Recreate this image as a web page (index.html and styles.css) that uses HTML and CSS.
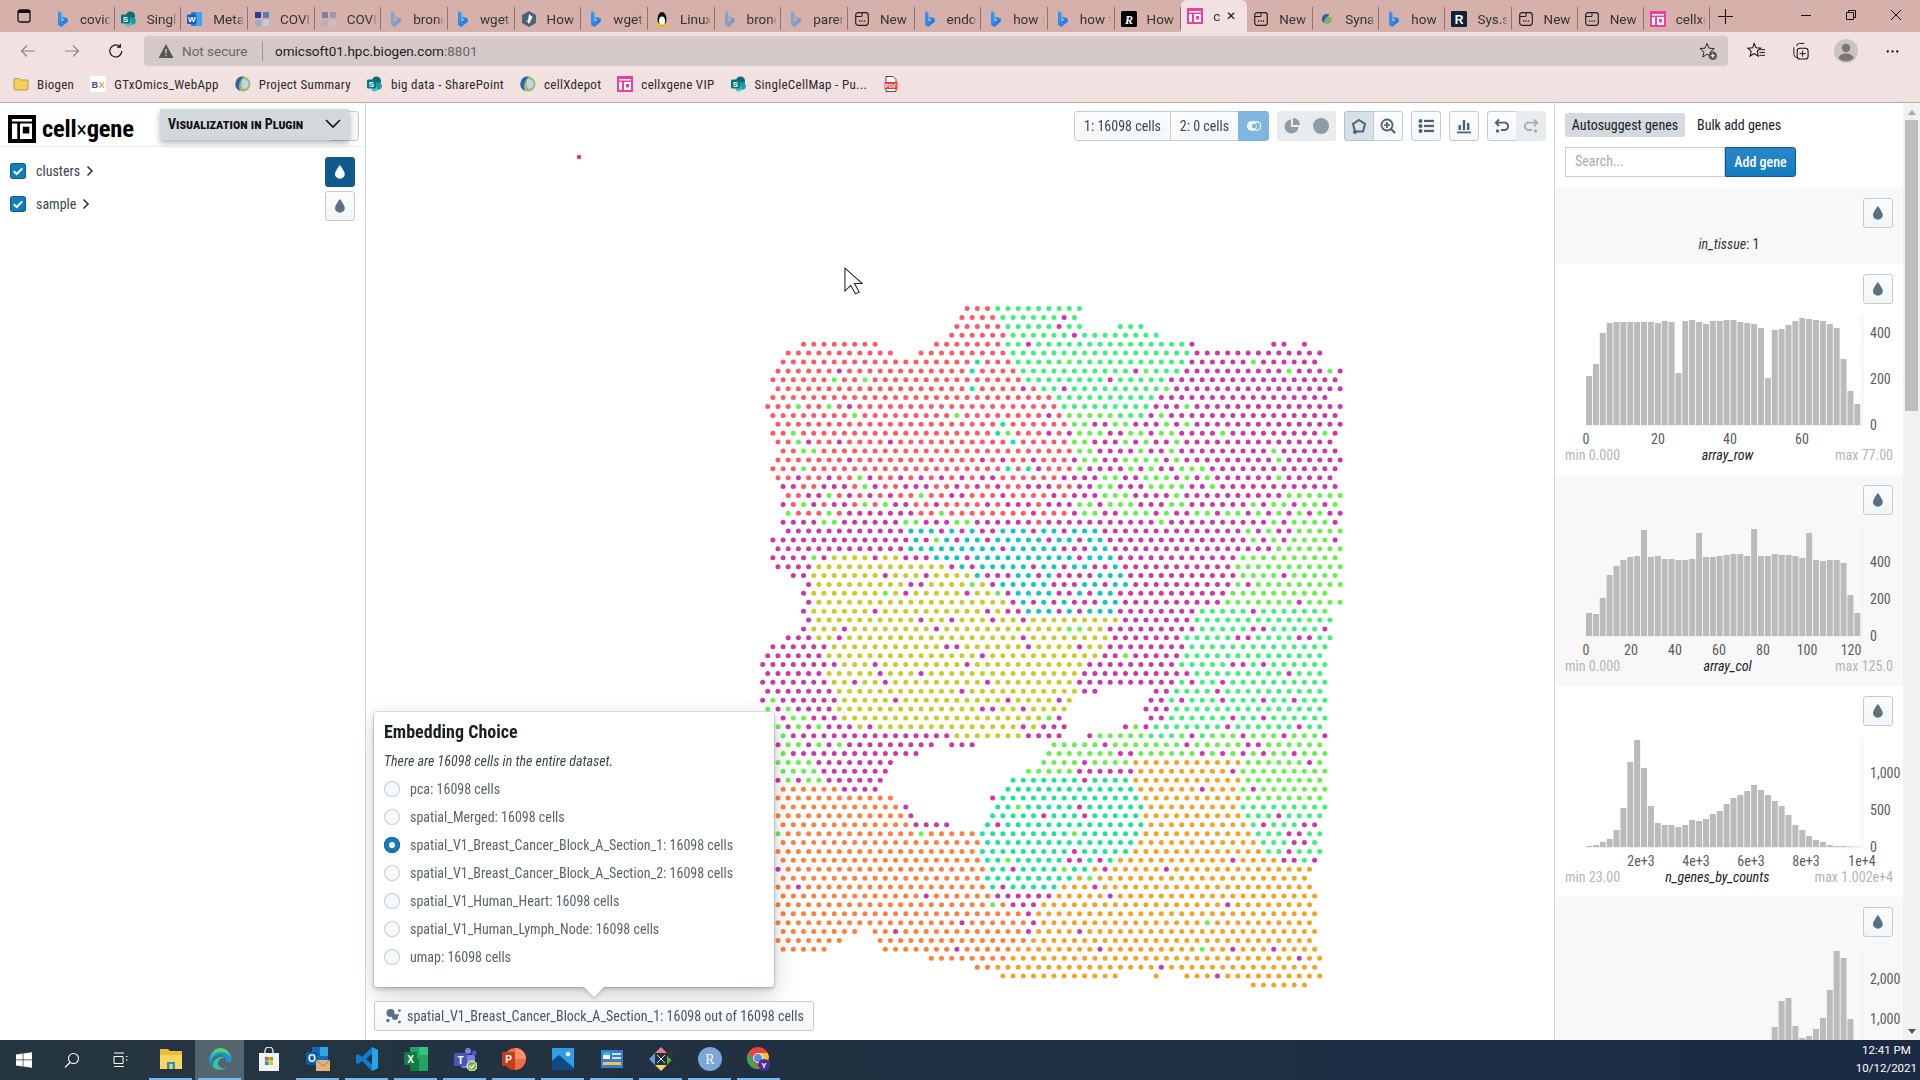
FILE: index.html
```html
<!DOCTYPE html>
<html lang="en">
<head>
<meta charset="utf-8">
<title>cellxgene</title>
<link rel="stylesheet" href="styles.css">
</head>
<body>
<svg class="sprite" xmlns="http://www.w3.org/2000/svg">
  <defs>
    <linearGradient id="bingfill" x1="0" y1="0" x2="1" y2="1"><stop offset="0" stop-color="#3aa0f0"/><stop offset="1" stop-color="#1c6fe0"/></linearGradient>
    <symbol id="bing" viewBox="0 0 16 16"><path fill="url(#bingfill)" d="M4 0l3.400 1.200v9.400l3-1.700-1.600-.8-1-2.600 6 2.100v3.200L7.400 16 4 14.100z"/></symbol>
    <symbol id="sp" viewBox="0 0 16 16"><circle cx="9.500" cy="5" r="4.500" fill="#0b6a70"/><circle cx="11" cy="10" r="3.800" fill="#1a9ba1"/><circle cx="7.500" cy="12.500" r="3" fill="#37c6d0"/><rect x="0" y="3.500" width="9" height="9" rx="1.200" fill="#03787c"/><text x="4.500" y="10.800" class="svgglyph">S</text></symbol>
    <symbol id="word" viewBox="0 0 16 16"><rect x="4" y="1" width="11" height="14" rx="1" fill="#2b7cd3"/><rect x="9" y="1" width="6" height="14" fill="#41a5ee"/><rect x="0" y="3.500" width="9.500" height="9.500" rx="1" fill="#185abd"/><text x="4.700" y="11" class="svgglyph">W</text></symbol>
    <symbol id="grid" viewBox="0 0 16 16"><rect x="1" y="1" width="6" height="6" fill="#2a3f8f"/><rect x="9" y="1" width="6" height="6" fill="#5a7ab8"/><rect x="1" y="9" width="6" height="6" fill="#8fb0d6"/><rect x="9" y="9" width="6" height="6" fill="#b9d2e6"/></symbol>
    <symbol id="hex" viewBox="0 0 16 16"><path fill="#4c6275" d="M8 0l7 4v8l-7 4-7-4V4z"/><path fill="#fff" d="M8 3l3.500 3-3.500 7-3-4 2 1z"/></symbol>
    <symbol id="tux" viewBox="0 0 16 16"><ellipse cx="8" cy="8" rx="4.500" ry="7" fill="#111"/><ellipse cx="8" cy="10" rx="3" ry="4.500" fill="#fff"/><ellipse cx="4.500" cy="14" rx="3" ry="1.500" fill="#f5c012"/><ellipse cx="11.500" cy="14" rx="3" ry="1.500" fill="#f5c012"/></symbol>
    <symbol id="nt" viewBox="0 0 16 16"><rect x="1.700" y="1.700" width="12.600" height="12.600" rx="2.500" fill="none" stroke="#222" stroke-width="1.200"/><path d="M2 5.500h6V2" fill="none" stroke="#222"/><path d="M5 10h1.200M7.400 10h1.200M9.800 10H11" stroke="#222" stroke-width="1.400"/></symbol>
    <symbol id="rblack" viewBox="0 0 16 16"><rect width="16" height="16" rx="1.500" fill="#000"/><text x="8" y="12.500" class="svgglyph svgitalic">R</text></symbol>
    <symbol id="rnavy" viewBox="0 0 16 16"><rect width="16" height="16" rx="1" fill="#0d2538"/><text x="8" y="12.500" class="svgglyph svgbig">R</text></symbol>
    <symbol id="pink" viewBox="0 0 16 16"><rect width="16" height="16" fill="#ef3e9c"/><path fill="#fff" d="M2 3h12v1.500H2zM2 6h3v8H2zM7 6h7v8H7z"/><rect x="9" y="8" width="3" height="3.500" fill="#ef3e9c"/></symbol>
    <symbol id="swirl" viewBox="0 0 16 16"><circle cx="8" cy="8" r="5" fill="#7fae6a"/><path fill="#2a5fa8" d="M8 3a5 5 0 0 0-3 9c0-4 2-6 6-8z"/><circle cx="11" cy="5" r="1.500" fill="#e3c24d"/></symbol>
    <symbol id="globe" viewBox="0 0 16 16"><circle cx="8" cy="8" r="7.500" fill="#9db96d"/><path fill="#2f62a8" d="M8 .5a7.500 7.500 0 0 0-3 14.400C2.500 10 5 4 9 .6z"/><path fill="#c4d6e6" d="M8 3a5 5 0 0 1 1 10C6 11 6 6 8 3z"/></symbol>
    <symbol id="folder" viewBox="0 0 16 16"><path fill="#f5cf58" stroke="#a88a2a" stroke-width=".8" d="M1 3.500a1 1 0 0 1 1-1h4l1.500 1.500H14a1 1 0 0 1 1 1v8a1 1 0 0 1-1 1H2a1 1 0 0 1-1-1z"/></symbol>
    <symbol id="bx" viewBox="0 0 16 16"><rect width="16" height="16" fill="#fff"/><text x="5" y="12" class="svgglyph svgbx">B</text><text x="12" y="12" class="svgglyph svgbxo">X</text></symbol>
    <symbol id="pdf" viewBox="0 0 16 16"><path fill="#fff" stroke="#222" stroke-width=".8" d="M3 .5h7l3 3V15.500H3z"/><rect x="1.500" y="6" width="13" height="7" fill="#ee3c3c"/><text x="8" y="11.700" class="svgglyph svgtiny">PDF</text></symbol>
    <symbol id="tint" viewBox="0 0 16 16"><path d="M7.880 1s-4.900 6.220-4.900 8.900a4.900 4.900 0 0 0 9.800 0C12.780 7.220 7.880 1 7.880 1z"/></symbol>
    <symbol id="checkbox" viewBox="0 0 16 16"><path d="M3.700 8.200l3 2.800 5.600-5.600" fill="none" stroke="#fff" stroke-width="2"/></symbol>
  </defs>
</svg>

<header class="tabstrip">
  <button class="tab-menu"><svg viewBox="0 0 16 16"><rect x="2" y="2" width="12" height="12" rx="2" fill="none" stroke="#111" stroke-width="1.300"/><rect x="2" y="2" width="12" height="3" fill="#111"/></svg></button>
  <div class="tabs">
    <div class="tab"><svg class="fav"><use href="#bing"/></svg><span>covid</span></div>
    <div class="tab"><svg class="fav"><use href="#sp"/></svg><span>Single</span></div>
    <div class="tab"><svg class="fav"><use href="#word"/></svg><span>Meta</span></div>
    <div class="tab"><svg class="fav"><use href="#grid"/></svg><span>COVID</span></div>
    <div class="tab faded"><svg class="fav"><use href="#grid"/></svg><span>COVID</span></div>
    <div class="tab faded"><svg class="fav"><use href="#bing"/></svg><span>bronc</span></div>
    <div class="tab"><svg class="fav"><use href="#bing"/></svg><span>wget</span></div>
    <div class="tab"><svg class="fav"><use href="#hex"/></svg><span>How t</span></div>
    <div class="tab"><svg class="fav"><use href="#bing"/></svg><span>wget</span></div>
    <div class="tab"><svg class="fav"><use href="#tux"/></svg><span>Linux</span></div>
    <div class="tab faded"><svg class="fav"><use href="#bing"/></svg><span>bronc</span></div>
    <div class="tab faded"><svg class="fav"><use href="#bing"/></svg><span>paren</span></div>
    <div class="tab"><svg class="fav"><use href="#nt"/></svg><span>New</span></div>
    <div class="tab"><svg class="fav"><use href="#bing"/></svg><span>endo</span></div>
    <div class="tab"><svg class="fav"><use href="#bing"/></svg><span>how t</span></div>
    <div class="tab"><svg class="fav"><use href="#bing"/></svg><span>how t</span></div>
    <div class="tab"><svg class="fav"><use href="#rblack"/></svg><span>How</span></div>
    <div class="tab active"><svg class="fav"><use href="#pink"/></svg><span>c</span><i class="tab-close">&#10005;</i></div>
    <div class="tab"><svg class="fav"><use href="#nt"/></svg><span>New</span></div>
    <div class="tab"><svg class="fav"><use href="#swirl"/></svg><span>Synap</span></div>
    <div class="tab"><svg class="fav"><use href="#bing"/></svg><span>how t</span></div>
    <div class="tab"><svg class="fav"><use href="#rnavy"/></svg><span>Sys.se</span></div>
    <div class="tab"><svg class="fav"><use href="#nt"/></svg><span>New</span></div>
    <div class="tab"><svg class="fav"><use href="#nt"/></svg><span>New</span></div>
    <div class="tab"><svg class="fav"><use href="#pink"/></svg><span>cellxg</span></div>
  </div>
  <svg class="newtab" viewBox="0 0 16 16"><path d="M8 0v16M0 8h16" stroke="#111" stroke-width="1.100"/></svg>
  <div class="winctl">
    <svg viewBox="0 0 12 12"><path d="M1 6.500h10" stroke="#111"/></svg>
    <svg viewBox="0 0 12 12"><path d="M1.500 3.500h7v7h-7zM3.500 3.500v-2h7v7h-2" fill="none" stroke="#111"/></svg>
    <svg viewBox="0 0 12 12"><path d="M1 1l10 10M11 1L1 11" stroke="#111"/></svg>
  </div>
</header>

<nav class="toolbar">
  <svg class="nav-ico dim" viewBox="0 0 16 16"><path d="M15 8H1.500M7 2.500L1.500 8 7 13.500" fill="none" stroke="#8b8080" stroke-width="1.100"/></svg>
  <svg class="nav-ico dim" viewBox="0 0 16 16"><path d="M1 8h13.500M9 2.500L14.500 8 9 13.500" fill="none" stroke="#8b8080" stroke-width="1.100"/></svg>
  <svg class="nav-ico" viewBox="0 0 16 16"><path d="M13.800 8a6 6 0 1 1-2-4.500M12.300 1v3.200H9" fill="none" stroke="#111" stroke-width="1.200"/></svg>
  <div class="addressbar">
    <svg class="warn" viewBox="0 0 16 16"><path fill="#555" d="M8 1l7.500 14H.5z"/><path d="M8 6v4.500M8 11.700v1.500" stroke="#d5c8c8" stroke-width="1.400"/></svg>
    <span class="notsecure">Not secure</span>
    <i class="addr-sep"></i>
    <span class="url">omicsoft01.hpc.biogen.com<em>:8801</em></span>
    <svg class="star-add" viewBox="0 0 20 20"><path d="M8.500 1.500l2.100 5 5.400.4-4.100 3.500 1.300 5.300-4.700-2.800-4.600 2.800 1.300-5.300L1 6.900l5.400-.4z" fill="none" stroke="#222"/><circle cx="14.500" cy="14.500" r="4.500" fill="#555"/><path d="M14.500 12.200v4.600M12.200 14.500h4.600" stroke="#fff"/></svg>
  </div>
  <div class="tool-icons">
    <svg viewBox="0 0 20 20"><path d="M7.500 1.500l2 4.600 5 .4-3.800 3.300 1.200 5-4.400-2.700-4.300 2.700 1.200-5L1 6.500l5-.4z" fill="none" stroke="#111" stroke-width="1.100"/><path d="M14 8h5M13 11h6M13 14h6" stroke="#111"/></svg>
    <svg viewBox="0 0 20 20"><path d="M3 5.500V13a4 4 0 0 0 3 3.500M6 4.500a3 3 0 0 1 3-3h5" fill="none" stroke="#111"/><rect x="6.500" y="6.500" width="11.500" height="11.500" rx="3" fill="none" stroke="#111" stroke-width="1.100"/><path d="M12.200 9v6.500M9 12.200h6.500" stroke="#111"/></svg>
    <svg class="avatar" viewBox="0 0 24 24"><circle cx="12" cy="12" r="12" fill="#c9c3c1"/><circle cx="12" cy="9" r="4.200" fill="#7b7573"/><path d="M4.500 19.500a7.500 5 0 0 1 15 0 11.500 11.500 0 0 1-15 0z" fill="#7b7573"/></svg>
    <svg viewBox="0 0 20 20"><circle cx="5" cy="10" r="1.200" fill="#111"/><circle cx="10" cy="10" r="1.200" fill="#111"/><circle cx="15" cy="10" r="1.200" fill="#111"/></svg>
  </div>
</nav>

<nav class="bookmarks">
  <a class="bm"><svg class="fav"><use href="#folder"/></svg>Biogen</a>
  <a class="bm"><svg class="fav"><use href="#bx"/></svg>GTxOmics_WebApp</a>
  <a class="bm"><svg class="fav"><use href="#globe"/></svg>Project Summary</a>
  <a class="bm"><svg class="fav"><use href="#sp"/></svg>big data - SharePoint</a>
  <a class="bm"><svg class="fav"><use href="#globe"/></svg>cellXdepot</a>
  <a class="bm"><svg class="fav"><use href="#pink"/></svg>cellxgene VIP</a>
  <a class="bm"><svg class="fav"><use href="#sp"/></svg>SingleCellMap - Pu...</a>
  <a class="bm"><svg class="fav"><use href="#pdf"/></svg></a>
</nav>

<div class="app">
  <aside class="left">
    <div class="brand">
      <svg class="logo" viewBox="0 0 28 28"><rect width="28" height="28" fill="#000"/><path fill="#fff" d="M4 4h20v2.500H4zM4 8.500h5.300V24H4zM12 8.500h12V24H12z"/><rect x="14.800" y="11.700" width="6.500" height="6.800" fill="#000"/></svg>
      <span class="wordmark">cell<b>&#215;</b>gene</span>
    </div>
    <div class="behind-btn"><svg class="tint-ico"><use href="#tint"/></svg></div>
    <div class="plugin-bar"><span>Visualization in Plugin</span><svg viewBox="0 0 16 10"><path d="M1 1l7 7 7-7" fill="none" stroke="#111" stroke-width="1.600"/></svg></div>
    <div class="cat-list">
      <div class="cat-row">
        <span class="check"><svg><use href="#checkbox"/></svg></span>
        <span class="cat-name">clusters</span>
        <svg class="caret" viewBox="0 0 8 12"><path d="M1.500 1.500L6 6l-4.500 4.500" fill="none" stroke="#333" stroke-width="1.600"/></svg>
        <button class="tint-btn on"><svg class="tint-ico"><use href="#tint"/></svg></button>
      </div>
      <div class="cat-row">
        <span class="check"><svg><use href="#checkbox"/></svg></span>
        <span class="cat-name">sample</span>
        <svg class="caret" viewBox="0 0 8 12"><path d="M1.500 1.500L6 6l-4.500 4.500" fill="none" stroke="#333" stroke-width="1.600"/></svg>
        <button class="tint-btn"><svg class="tint-ico"><use href="#tint"/></svg></button>
      </div>
    </div>
  </aside>

  <main class="plot">
    <canvas id="scatter" width="1188" height="937"></canvas>

    <div class="plot-tools">
      <div class="group">
        <button class="btn wide1">1: 16098 cells</button>
        <button class="btn wide2">2: 0 cells</button>
        <button class="btn venn"><svg viewBox="0 0 18 14"><circle cx="6.500" cy="7" r="5.500" fill="#fff" opacity=".85"/><circle cx="11.500" cy="7" r="5" fill="none" stroke="#fff" stroke-width="1.300"/><circle cx="9" cy="7" r="2.500" fill="#7fb6df"/></svg></button>
      </div>
      <div class="group disabled">
        <button class="btn"><svg viewBox="0 0 16 16"><path fill="#8f9ba5" d="M7 1.500a7 7 0 1 0 7.500 7.500H7z"/><path fill="#8f9ba5" d="M9 0a7 7 0 0 1 7 7H9z"/></svg></button>
        <button class="btn"><svg viewBox="0 0 16 16"><circle cx="8" cy="8" r="8" fill="#8f9ba5"/></svg></button>
      </div>
      <div class="group">
        <button class="btn active"><svg viewBox="0 0 16 16"><path d="M8 2l6 4-2 7.500H4L2 6z" fill="none" stroke="#4d6170" stroke-width="2"/><circle cx="4" cy="14" r="2" fill="#4d6170"/></svg></button>
        <button class="btn"><svg viewBox="0 0 16 16"><circle cx="7" cy="7" r="5.500" fill="none" stroke="#4d6170" stroke-width="1.800"/><path d="M11 11l4 4" stroke="#4d6170" stroke-width="2.200"/><path d="M7 4v6M4 7h6" stroke="#4d6170" stroke-width="1.700"/></svg></button>
      </div>
      <button class="btn solo"><svg viewBox="0 0 16 16"><g fill="#4d6170"><circle cx="2.500" cy="3" r="2"/><circle cx="2.500" cy="8" r="2"/><circle cx="2.500" cy="13" r="2"/><rect x="6" y="1.800" width="10" height="2.300"/><rect x="6" y="6.800" width="10" height="2.300"/><rect x="6" y="11.800" width="10" height="2.300"/></g></svg></button>
      <button class="btn solo"><svg viewBox="0 0 16 16"><g fill="#4d6170"><rect x="1" y="13.500" width="14" height="1.800"/><rect x="2.500" y="7" width="2.400" height="5"/><rect x="6.800" y="2" width="2.400" height="10"/><rect x="11" y="5" width="2.400" height="7"/></g></svg></button>
      <div class="group">
        <button class="btn"><svg viewBox="0 0 16 16"><path d="M5 1.500L1.800 4.700 5 8M2 4.700h9a3.700 3.700 0 0 1 0 7.300H7" fill="none" stroke="#4d6170" stroke-width="1.800"/><circle cx="3.500" cy="13" r="1.700" fill="#4d6170"/></svg></button>
        <button class="btn off"><svg viewBox="0 0 16 16"><path d="M11 1.500l3.200 3.200L11 8M14 4.700H5a3.700 3.700 0 0 0 0 7.300h4" fill="none" stroke="#a3aeb6" stroke-width="1.800"/><circle cx="12.500" cy="13" r="1.700" fill="#a3aeb6"/></svg></button>
      </div>
    </div>

    <svg class="cursor" viewBox="0 0 20 30"><path d="M1 1v24l6-6 5 9 4-2-5-9h8z" fill="#fff" stroke="#222" stroke-width="1.100"/></svg>

    <div class="popover">
      <h4>Embedding Choice</h4>
      <p>There are 16098 cells in the entire dataset.</p>
      <label class="radio"><i></i>pca: 16098 cells</label>
      <label class="radio"><i></i>spatial_Merged: 16098 cells</label>
      <label class="radio sel"><i></i>spatial_V1_Breast_Cancer_Block_A_Section_1: 16098 cells</label>
      <label class="radio"><i></i>spatial_V1_Breast_Cancer_Block_A_Section_2: 16098 cells</label>
      <label class="radio"><i></i>spatial_V1_Human_Heart: 16098 cells</label>
      <label class="radio"><i></i>spatial_V1_Human_Lymph_Node: 16098 cells</label>
      <label class="radio"><i></i>umap: 16098 cells</label>
      <span class="pop-arrow"></span>
    </div>
    <button class="embed-btn">
      <svg viewBox="0 0 16 16"><g fill="#5c7080"><circle cx="5.500" cy="5" r="4"/><circle cx="10" cy="9" r="3"/><circle cx="3" cy="12.500" r="1.700"/><circle cx="14.500" cy="2.500" r="1.300"/><circle cx="14.500" cy="14" r="1.400"/><circle cx="13" cy="7" r="1"/></g></svg>
      <span>spatial_V1_Breast_Cancer_Block_A_Section_1: 16098 out of 16098 cells</span>
    </button>
  </main>

  <aside class="right">
    <div class="gene-tabs"><span class="gene-tab on">Autosuggest genes</span><span class="gene-tab">Bulk add genes</span></div>
    <div class="gene-search"><input class="search" placeholder="Search..."><button class="add-gene">Add gene</button></div>
    <div class="metric short">
      <button class="tint-btn"><svg class="tint-ico"><use href="#tint"/></svg></button>
      <div class="single"><em>in_tissue</em>: 1</div>
    </div>
    <div id="charts"></div>
    <div class="scrollbar"><span class="sb-up"></span><span class="sb-thumb"></span><span class="sb-down"></span></div>
  </aside>
</div>

<footer class="taskbar">
  <span class="tb-sys"><svg viewBox="0 0 16 16"><path fill="#fff" d="M0 2.400l6.700-.9v6H0zM7.400 1.400L16 .2v7.300H7.400zM0 8.300h6.700v6.100L0 13.500zM7.400 8.300H16v7.500l-8.600-1.200z"/></svg></span>
  <span class="tb-sys"><svg viewBox="0 0 16 16"><circle cx="9.500" cy="6.500" r="5" fill="none" stroke="#fff" stroke-width="1.100"/><path d="M6 10.500L1 15.500" stroke="#fff" stroke-width="1.100"/></svg></span>
  <span class="tb-sys"><svg viewBox="0 0 16 16"><path d="M2 1h10M2 14.500h10M2 4.500h9v7H2zM14 4.500h1.500M14 8h1.500" fill="none" stroke="#fff"/></svg></span>
  <div class="tb-apps">
    <span class="app-ico run"><svg viewBox="0 0 24 24"><path fill="#f5b93a" d="M1 2h8l2 2h12v18H1z"/><path fill="#f9d65c" d="M1 8h22v14H1z"/><path fill="#2f8ccb" d="M8 15h8v7H8z"/><rect x="10.500" y="17" width="3" height="5" fill="#f9d65c"/></svg></span>
    <span class="app-ico run current"><svg viewBox="0 0 24 24"><path fill="#1f8fd8" d="M12 1a11 11 0 0 0-8 18.500C2 13 7 7 13 8c5 1 6 5 4 7h6A11 11 0 0 0 12 1z"/><path fill="#2fc5a8" d="M5 20c3 3 9 4 14 .5-5 2-9 0-9-4 0-4 4-6.500 7.500-6C12 8 4 12 5 20z"/><path fill="#55d26a" d="M12 1a11 11 0 0 1 11 12c0-4-4-8-10-8S4 9 3 13C3 6 7 1 12 1z"/></svg></span>
    <span class="app-ico"><svg viewBox="0 0 24 24"><path fill="none" stroke="#eee" stroke-width="1.300" d="M8 6V4a4 4 0 0 1 8 0v2"/><path fill="#f3f3f3" d="M2 6h20v18H2z"/><rect x="8" y="10" width="3.700" height="3.700" fill="#f25022"/><rect x="12.300" y="10" width="3.700" height="3.700" fill="#7fba00"/><rect x="8" y="14.300" width="3.700" height="3.700" fill="#00a4ef"/><rect x="12.300" y="14.300" width="3.700" height="3.700" fill="#ffb900"/></svg></span>
    <span class="app-ico run"><svg viewBox="0 0 24 24"><rect x="6" y="0" width="16" height="18" fill="#0f6cbd"/><rect x="14" y="0" width="8" height="9" fill="#2ea8e5"/><rect x="0" y="5" width="12" height="13" rx="1" fill="#0a5ca8"/><text x="6" y="15.200" class="svgglyph svglarge">O</text><rect x="10" y="13" width="14" height="11" fill="#e2b27f"/><path d="M10 13l7 6 7-6" fill="none" stroke="#a57548"/></svg></span>
    <span class="app-ico run"><svg viewBox="0 0 24 24"><path fill="#0f7fcc" d="M17 0l6 3v18l-6 3L7 14l-4 3-2-1V8l2-1 4 3zM17 6.500l-6 5.500 6 5.500z"/><path fill="#29a3e8" d="M17 0l6 3v18l-6 3z"/></svg></span>
    <span class="app-ico run"><svg viewBox="0 0 24 24"><path fill="#21a366" d="M6 0h18v24H6z"/><path fill="#107c41" d="M6 12h9v12H6z"/><path fill="#33c481" d="M15 0h9v8h-9z"/><rect x="0" y="5" width="13" height="13" rx="1" fill="#107c41"/><text x="6.500" y="15.500" class="svgglyph svglarge">X</text></svg></span>
    <span class="app-ico run"><svg viewBox="0 0 24 24"><circle cx="15" cy="4" r="3" fill="#7b83eb"/><circle cx="21" cy="6" r="2.500" fill="#5059c9"/><rect x="8" y="8" width="14" height="13" rx="2" fill="#7b83eb"/><rect x="1" y="6" width="13" height="13" rx="1" fill="#4b53bc"/><text x="7.500" y="16.500" class="svgglyph svglarge">T</text><circle cx="19" cy="19" r="5" fill="#7eb33f" stroke="#fff"/><path d="M16.500 19l2 2 3-3.500" fill="none" stroke="#fff" stroke-width="1.200"/></svg></span>
    <span class="app-ico run"><svg viewBox="0 0 24 24"><circle cx="13" cy="12" r="11" fill="#ed6c47"/><path fill="#ff8f6b" d="M13 1a11 11 0 0 1 11 11H13z"/><path fill="#c43e1c" d="M13 23a11 11 0 0 1-11-11h11z"/><rect x="0" y="5" width="13" height="14" rx="1" fill="#c43e1c"/><text x="6.500" y="16" class="svgglyph svglarge">P</text></svg></span>
    <span class="app-ico run"><svg viewBox="0 0 24 24"><rect x="1" y="1" width="22" height="22" fill="#2e9fe6"/><path fill="#124a86" d="M1 23v-9l7-6 15 13v2z"/><circle cx="17" cy="7" r="2.200" fill="#fff"/></svg></span>
    <span class="app-ico run"><svg viewBox="0 0 24 24"><rect x="1" y="3" width="22" height="18" fill="#3a7bd5"/><rect x="3" y="5" width="7" height="7" fill="#fff"/><rect x="3" y="5" width="7" height="3" fill="#35b5e5"/><rect x="12" y="6" width="9" height="2" fill="#cfe6f7"/><rect x="12" y="10" width="9" height="2" fill="#cfe6f7"/><rect x="3" y="15" width="18" height="3" fill="#f4c542"/></svg></span>
    <span class="app-ico run"><svg viewBox="0 0 24 24"><path fill="#f4d657" d="M12 24L6 18h12z"/><path fill="#5fa84b" d="M24 12l-6 6V6z"/><path fill="#6b9bd8" d="M0 12l6-6v12z"/><path fill="#e87f7f" d="M12 0l6 6H6z"/><rect x="6" y="6" width="12" height="12" fill="#333" transform="rotate(45 12 12) scale(.9)" transform-origin="12 12"/><path d="M8 16l8-8M8 8l8 8" stroke="#ddd"/></svg></span>
    <span class="app-ico run"><svg viewBox="0 0 24 24"><circle cx="12" cy="12" r="12" fill="#7ba6d8"/><text x="12" y="17" class="svgglyph svgr">R</text></svg></span>
    <span class="app-ico run"><svg viewBox="0 0 24 24"><circle cx="11" cy="11" r="11" fill="#e8443a"/><path fill="#3aa757" d="M1.500 5.500L11 22A11 11 0 0 1 1.500 5.500z"/><path fill="#fbc02d" d="M11 22L22 11c0-2-1-4-1.500-5H11z"/><circle cx="11" cy="11" r="4.500" fill="#4a8ee8" stroke="#fff"/><circle cx="17" cy="18" r="6" fill="#4b2e9e"/><text x="17" y="21" class="svgglyph">Y</text></svg></span>
  </div>
  <div class="clock"><span>12:41 PM</span><span>10/12/2021</span></div>
</footer>
<script src="app.js"></script>
</body>
</html>
```
FILE: styles.css
```css
* { box-sizing: border-box; }
html, body { margin: 0; height: 1080px; overflow: hidden; }
body { display: flex; flex-direction: column; width: 1920px; font-family: "Roboto", "Liberation Sans", sans-serif; color: #182026; background: #fff; }
.sprite { width: 0; height: 0; position: absolute; }
.svgglyph { fill: #fff; font: 700 8px "Liberation Sans", sans-serif; text-anchor: middle; }
.svgitalic { font: italic 700 12px "Liberation Serif", serif; }
.svgbig { font: 700 12px "Liberation Sans", sans-serif; }
.svgbx { fill: #3b4a9a; font-size: 9px; }
.svgbxo { fill: #f0a040; font-size: 9px; }
.svgtiny { font-size: 5.500px; }
.svglarge { font-size: 10px; }
.svgr { font: 400 14px "Liberation Serif", serif; }

/* browser chrome */
.tabstrip { height: 32px; background: #d6b0aa; display: flex; align-items: stretch; flex: none; }
.tab-menu { width: 48px; border: 0; background: none; padding: 8px 16px; flex: none; }
.tab-menu svg { width: 16px; height: 16px; display: block; }
.tabs { display: flex; flex: none; }
.tab { width: 66.670px; flex: none; display: flex; align-items: center; padding: 0 3px 0 6px; gap: 10px; border-right: 1px solid #8f7570; margin: 7px 0 2px; font-size: 13.500px; color: #333; overflow: hidden; white-space: nowrap; }
.tab.active ~ .tab { width: 66.100px; }
.tab span { flex: 1; overflow: hidden; -webkit-mask-image: linear-gradient(90deg, #000 80%, transparent); mask-image: linear-gradient(90deg, #000 80%, transparent); }
.tab.faded .fav { opacity: .45; }
.fav { width: 16px; height: 16px; flex: none; }
.tab.active { background: #f1e2e1; border: 0; margin: 0; border-radius: 6px 6px 0 0; gap: 10px; width: 66px; }
.tab.active span { flex: none; width: 8px; }
.tab-close { font-style: normal; font-size: 12px; color: #111; margin-left: -5px; }
.newtab { width: 15px; height: 15px; margin: 9px 0 0 8px; flex: none; }
.winctl { margin-left: auto; display: flex; gap: 33px; padding: 9px 18px 0 0; }
.winctl svg { width: 12px; height: 12px; }

.toolbar { height: 34px; background: #f1e2e1; display: flex; align-items: flex-end; flex: none; padding-left: 20px; }
.nav-ico { width: 16px; height: 16px; margin: 0 28px 7px 0; flex: none; }
.nav-ico:nth-child(3) { margin-right: 20px; }
.addressbar { width: 1584px; height: 30px; background: #d5c8c8; border-radius: 4px; display: flex; align-items: center; padding-left: 14px; font-size: 13.500px; flex: none; }
.warn { width: 16px; height: 16px; margin-right: 8px; }
.notsecure { color: #6c6464; font-size: 13.500px; width: 70px; white-space: nowrap; }
.addr-sep { width: 1px; height: 20px; background: #9f9494; margin: 0 12px 0 10px; }
.url { color: #1f1c1c; white-space: nowrap; }
.url em { font-style: normal; color: #6c6464; }
.star-add { width: 19px; height: 19px; margin-left: auto; margin-right: 10px; }
.tool-icons { display: flex; flex: 1; align-items: center; height: 30px; padding-left: 19px; gap: 24.500px; }
.tool-icons svg { width: 19px; height: 19px; }
.tool-icons .avatar { width: 24px; height: 24px; }

.bookmarks { height: 37px; background: #f1e2e1; border-bottom: 1px solid #b9aaa9; display: flex; align-items: center; flex: none; padding-left: 13px; font-size: 13px; font-stretch: 85%; color: #2a2a2a; }
.bm { display: flex; align-items: center; gap: 8px; margin-right: 16px; white-space: nowrap; letter-spacing: .3px; }

/* app */
.app { flex: 1; display: flex; min-height: 0; }
.left { width: 366px; flex: none; border-right: 1px solid #cad7e3; position: relative; font-stretch: 85%; }
.brand { height: 44px; border-bottom: 1px solid #eee; display: flex; align-items: center; padding: 8px 8px 0; gap: 6px; }
.logo { width: 28px; height: 28px; flex: none; }
.wordmark { font-size: 24.500px; font-weight: 700; color: #000; letter-spacing: -.2px; }
.wordmark b { font-weight: 400; font-size: 22px; }
.behind-btn { position: absolute; top: 8px; left: 329px; width: 30px; height: 30px; border: 1px solid #c4ccd2; border-radius: 3px; background: #f5f8fa; display: flex; align-items: center; justify-content: center; }
.plugin-bar { position: absolute; top: 6px; left: 160px; width: 189px; height: 31px; background: #d3d9db; box-shadow: 0 3px 6px rgba(0,0,0,.3); display: flex; align-items: center; justify-content: space-between; padding: 0 8px 2px; font-weight: 700; font-size: 14px; font-variant: small-caps; color: #111; }
.plugin-bar svg { width: 16px; height: 10px; }
.cat-list { display: flex; flex-direction: column; gap: 4px; padding: 10px 10px 0; }
.cat-row { display: flex; align-items: center; height: 30px; font-size: 14px; color: #3c4650; }
.cat-row > span, .cat-row > .caret { margin-bottom: 2px; }
.cat-row + .cat-row > span, .cat-row + .cat-row > .caret { margin-bottom: 4px; }
.check { width: 16px; height: 16px; border-radius: 3px; background: #137cbd; box-shadow: inset 0 0 0 1px rgba(16,22,26,.3); display: block; }
.check svg { width: 16px; height: 16px; display: block; }
.cat-name { margin-left: 10px; }
.caret { width: 8px; height: 12px; margin-left: 6px; }
.tint-btn { width: 30px; height: 30px; margin-left: auto; padding: 0; border: 1px solid #c4ccd2; border-radius: 3px; background: linear-gradient(#fbfcfd, #f2f5f7); display: flex; align-items: center; justify-content: center; flex: none; }
.tint-ico { width: 16px; height: 16px; fill: #5c7080; }
.tint-btn.on { background: #0f5a8c; border-color: #0f5a8c; }
.tint-btn.on .tint-ico { fill: #fff; }

.plot { flex: 1; position: relative; overflow: hidden; font-stretch: 85%; }
#scatter { position: absolute; inset: 0; }
.plot-tools { position: absolute; top: 8px; right: 8px; display: flex; gap: 8px; }
.group { display: flex; }
.btn { height: 30px; width: 30px; padding: 0; display: flex; align-items: center; justify-content: center; border: 1px solid #c4ccd2; background: linear-gradient(#fcfdfe, #f4f6f8); color: #3c4650; font: inherit; font-size: 14px; font-stretch: inherit; }
.btn svg { width: 16px; height: 16px; }
.group .btn:first-child { border-radius: 3px 0 0 3px; }
.group .btn:last-child { border-radius: 0 3px 3px 0; }
.group .btn + .btn { margin-left: -1px; }
.solo { border-radius: 3px; }
.wide1 { width: 97px; }
.wide2 { width: 69px; }
.btn.venn { width: 31px; background: #7fb6df; border-color: #7fb6df; }
.disabled .btn, .btn.off { background: #e8ecef; border-color: #e8ecef; }
.btn.active { background: #d8e1e8; border-color: #b5c2cc; }
.cursor { position: absolute; left: 478px; top: 164px; width: 19px; height: 29px; }

.popover { position: absolute; left: 8px; bottom: 53px; width: 400px; height: 275px; background: #fff; border-radius: 3px; box-shadow: 0 0 0 1px rgba(16,22,26,.1), 0 2px 4px rgba(16,22,26,.2), 0 8px 24px rgba(16,22,26,.2); padding: 9px 10px 10px; font-size: 14px; color: #5b636b; }
.popover h4 { margin: 0; font-size: 18px; line-height: 22px; font-weight: 700; color: #182026; }
.popover p { margin: 7px 0 3px; font-style: italic; line-height: 22px; color: #3c4650; }
.radio { display: flex; align-items: center; gap: 10px; height: 28px; }
.radio i { width: 16px; height: 16px; border-radius: 50%; background: #f7f9fa; box-shadow: inset 0 0 0 1px #c6ced4; flex: none; }
.radio.sel i { background: #137cbd; box-shadow: inset 0 0 0 1px #0f6aa5; position: relative; }
.radio.sel i::after { content: ""; position: absolute; inset: 5px; border-radius: 50%; background: #fff; }
.pop-arrow { position: absolute; left: 213px; bottom: -7px; width: 14px; height: 14px; background: #fff; transform: rotate(45deg); box-shadow: 2px 2px 3px rgba(16,22,26,.15); }
.embed-btn { position: absolute; left: 8px; bottom: 9px; width: 440px; height: 30px; display: flex; align-items: center; gap: 6px; padding: 0 10px; border: 1px solid #c4ccd2; border-radius: 3px; background: linear-gradient(#fcfdfe, #f4f6f8); font: inherit; font-size: 14px; font-stretch: inherit; color: #4a5560; white-space: nowrap; }
.embed-btn svg { width: 16px; height: 16px; flex: none; }

.right { width: 366px; flex: none; border-left: 1px solid #cad7e3; position: relative; overflow: hidden; font-stretch: 85%; }
.gene-tabs { display: flex; gap: 6px; padding: 10px 0 0 10px; font-size: 14px; color: #182026; }
.gene-tab { height: 24px; padding: 0 6px; line-height: 24px; border-radius: 3px; }
.gene-tab.on { background: #d5dade; width: 120px; text-align: center; white-space: nowrap; }
.gene-search { display: flex; margin: 10px 0 11px 10px; }
.search { width: 160px; height: 30px; border: 1px solid #c7d0d6; padding: 0 9px 2px; font: inherit; font-size: 14px; font-stretch: inherit; }
.search::placeholder { color: #a5adb4; }
.add-gene { width: 71px; height: 30px; border: 1px solid #0e5a8a; border-radius: 0 3px 3px 0; background: linear-gradient(#2b87c9, #137cbd); color: #fff; font: inherit; font-size: 14px; font-weight: 500; font-stretch: inherit; }
.metric { width: 348px; height: 211px; padding: 10px 10px 0; position: relative; background: #fff; }
.metric.short { height: 76px; background: #f8f8f8; }
.metric.tall { background: #f8f8f8; }
.single { text-align: center; font-size: 14px; margin-top: 8px; color: #333; }
.chart { display: block; margin: 0 -10px; overflow: visible; }
.chart text { font-size: 14px; fill: #5c5c5c; }
.metric-foot { display: flex; justify-content: space-between; font-size: 14px; line-height: 16px; color: #b5b5b5; margin-top: 1px; }
.metric-foot em { color: #182026; }

.scrollbar { position: absolute; top: 0; right: 0; bottom: 0; width: 17px; background: #f1f1f1; display: flex; flex-direction: column; align-items: center; }
.sb-up { margin-top: 7px; border: 4px solid transparent; border-bottom: 5px solid #a8a8a8; border-top: 0; }
.sb-thumb { width: 13px; height: 291px; background: #bdbdbd; margin-top: 5px; }
.sb-down { margin-top: auto; margin-bottom: 6px; border: 4px solid transparent; border-top: 5px solid #505050; border-bottom: 0; }

/* taskbar */
.taskbar { height: 40px; flex: none; background: linear-gradient(90deg, #263640, #1f2e42 60%, #1b2a44); display: flex; align-items: stretch; color: #fff; font-size: 11.500px; position: relative; }
.tb-sys { width: 48px; display: flex; align-items: center; justify-content: center; }
.tb-sys svg { width: 16px; height: 18px; }
.tb-apps { display: flex; margin-left: 2px; }
.app-ico { width: 49px; display: flex; align-items: center; justify-content: center; border-bottom: 2px solid transparent; }
.app-ico svg { width: 24px; height: 24px; }
.app-ico.run { border-image: linear-gradient(90deg, transparent 4px, #76b9ed 4px, #76b9ed 45px, transparent 45px) 1; }
.app-ico.current { background: #55656f; }
.clock { margin-left: auto; display: flex; flex-direction: column; align-items: center; justify-content: center; gap: 3px; padding: 0 3px 2px 0; line-height: 15px; }
```
FILE: app.js
```js
// Histograms: bar heights measured per chart, 40 bins
var charts = [
  { name: 'array_row', min: 'min 0.000', max: 'max 77.00',
    h: [49,61,92,102,103,103,103,103,103,103,102,104,103,52,104,105,103,101,104,104,105,105,103,102,101,97,47,95,96,100,104,107,106,105,104,101,97,66,34,21],
    xt: [['0',31],['20',103],['40',175],['60',247]], yt: [['400',92],['200',46],['0',0]] },
  { name: 'array_col', min: 'min 0.000', max: 'max 125.0',
    h: [23,22,38,61,70,76,79,80,106,79,80,77,77,76,76,77,103,79,79,80,81,82,82,80,107,80,80,82,81,81,80,78,103,76,75,76,76,73,41,23],
    xt: [['0',31],['20',76],['40',120],['60',164],['80',208],['100',252],['120',296]], yt: [['400',74],['200',37],['0',0]] },
  { name: 'n_genes_by_counts', min: 'min 23.00', max: 'max 1.002e+4',
    h: [1,2,5,8,17,39,85,107,79,41,24,22,22,20,22,27,26,28,33,36,43,49,52,56,62,57,52,46,41,32,22,17,11,7,5,2,1,1,0.500,0.300],
    xt: [['2e+3',86],['4e+3',141],['6e+3',196],['8e+3',251],['1e+4',307]], yt: [['1,000',74],['500',37],['0',0]] },
  { name: '', min: '', max: '',
    h: [0,0,0,0,0,0,0,0,0,0,0,0,0,0,0,0,0,0,0,0,0,0,0,0,0,0,0,32,58,61,33,21,23,30,41,69,108,101,40,0],
    xt: [], yt: [['2,000',80],['1,000',40]], base: 122 }
];
var NS = 'http://www.w3.org/2000/svg';
function el(tag, attrs, txt) {
  var e = document.createElementNS(NS, tag);
  for (var k in attrs) e.setAttribute(k, attrs[k]);
  if (txt) e.textContent = txt;
  return e;
}
var host = document.getElementById('charts');
charts.forEach(function (c, idx) {
  var m = document.createElement('div');
  m.className = 'metric' + (idx % 2 === 0 ? '' : ' tall');
  m.innerHTML = '<button class="tint-btn"><svg class="tint-ico"><use href="#tint"/></svg></button>';
  var base = c.base || 121;
  var svg = el('svg', { class: 'chart', width: 348, height: 142 });
  svg.appendChild(el('line', { x1: 307.500, x2: 307.500, y1: 12, y2: base, stroke: '#eee' }));
  svg.appendChild(el('line', { x1: 31, x2: 307, y1: base + .5, y2: base + .5, stroke: '#f0f0f0' }));
  c.h.forEach(function (v, i) {
    if (v) svg.appendChild(el('rect', { x: 31 + 6.88 * i, y: base - v, width: 6, height: v, fill: '#bbb' }));
  });
  c.xt.forEach(function (t) {
    svg.appendChild(el('text', { x: t[1], y: base + 19, 'text-anchor': 'middle' }, t[0]));
  });
  c.yt.forEach(function (t) {
    svg.appendChild(el('text', { x: 315, y: base - t[1] + 5 }, t[0]));
  });
  m.appendChild(svg);
  if (c.name) {
    var f = document.createElement('div');
    f.className = 'metric-foot';
    f.innerHTML = '<span>' + c.min + '</span><em>' + c.name + '</em><span>' + c.max + '</span>';
    m.appendChild(f);
  }
  host.appendChild(m);
});

// Scatter: spots on a hexagonal lattice, coordinates in reference-crop units.
var rows = [
  [[549,835]],[[536,822]],[[523,835],[938,990]],[[510,1030]],[[135,320],[470,1120],[1325,1351],[1403,1403]],
  [[96,355],[432,1443]],[[70,1443]],[[70,1495]],[[57,1495]],[[57,1495]],[[57,1470]],[[44,1495]],[[57,1495]],[[70,1495]],[[57,1495]],
  [[70,1470]],[[70,1495]],[[70,1495]],[[57,1495]],[[70,1468]],[[83,1495]],[[96,1495]],[[83,1495]],[[96,1495]],[[83,1495]],
  [[96,1495]],[[57,1480]],[[70,1495]],[[57,1480]],[[70,1495]],[[108,1480]],[[147,1495]],[[134,1468]],[[147,1495]],[[134,1468]],
  [[147,1468]],[[134,1468]],[[96,1468]],[[57,1455]],[[44,1455]],[[31,1455]],[[44,1442]],[[31,1455]],
  [[44,871],[1025,1442]],[[31,818],[1012,1455]],[[44,793],[1000,1442]],[[70,780],[1012,1455]],[[57,793],[948,1442]],[[70,780],[858,1455]],
  [[57,460],[505,560],[765,1442]],[[70,418],[753,1455]],[[57,353],[740,1442]],[[70,340],[700,1455]],[[57,327],[664,1442]],[[70,327],[650,1455]],
  [[57,353],[612,1442]],[[70,392],[625,1455]],[[57,405],[598,1442]],[[70,470],[495,495],[598,1428]],[[57,565],[572,1442]],
  [[70,1428]],[[57,1442]],[[70,1428]],[[57,1415]],[[70,1402]],[[57,1415]],[[70,1428]],[[57,1415]],[[70,1428]],[[57,1415]],
  [[70,265],[315,1428]],[[57,225],[325,1415]],[[78,187],[338,1428]],[[455,1440]],[[570,1440]],[[635,925],[1025,1025],[1100,1440]],[[1270,1400]]
];
var C = { red:'#ff5a62', spring:'#3ef07c', lime:'#69f04f', magenta:'#cf36a8', cyan:'#12c6c6', teal:'#1ce597', olive:'#c9cc2a', orange:'#ff7f3f', amber:'#f2a428' };
var ALL = [[0,0],[1600,0],[1600,1600],[0,1600]];
var regions = [
  ['lime', .012, ALL],
  ['amber', .96, [[960,1025],[1235,1025],[1240,1130],[1300,1230],[1430,1270],[1470,1545],[560,1545],[600,1490],[700,1430],[740,1340],[850,1270],[960,1240],[1000,1150]]],
  ['teal', .94, [[640,1060],[1000,1055],[1000,1150],[960,1240],[850,1280],[800,1325],[700,1325],[600,1320],[575,1190],[620,1120]]],
  ['orange', .98, [[0,1085],[360,1095],[410,1170],[590,1190],[600,1325],[700,1370],[700,1430],[600,1490],[560,1545],[0,1545]]],
  ['lime', .55, [[0,900],[180,920],[180,1090],[0,1090]]],
  ['magenta', .92, [[0,770],[190,770],[190,960],[460,960],[580,1000],[420,1030],[340,1060],[0,1090]]],
  ['olive', .88, [[170,570],[340,570],[540,610],[640,650],[670,720],[960,700],[900,760],[840,840],[790,930],[660,985],[280,975],[190,900],[160,780],[150,640]]],
  ['cyan', .62, [[400,510],[880,510],[960,620],[940,700],[850,750],[700,720],[640,640],[560,620],[480,610],[400,570]]],
  ['teal', .15, [[500,280],[720,280],[720,400],[500,400]]],
  ['teal', .2, [[540,130],[620,130],[620,210],[540,210]]],
  ['lime', .07, [[60,240],[350,240],[350,420],[60,420]]],
  ['red', .97, [[0,0],[610,0],[650,110],[690,180],[790,250],[800,300],[820,400],[0,400]]],
  ['lime', .18, [[130,400],[420,400],[600,540],[130,540]]],
  ['red', .55, [[0,400],[820,400],[790,510],[400,480],[250,490],[100,500],[0,500]]],
  ['spring', .94, [[610,0],[1130,0],[1130,125],[1050,200],[1010,270],[800,260],[690,180],[650,110]]],
  ['lime', .55, [[800,260],[1060,260],[1130,470],[1250,470],[1200,500],[840,500],[820,400]]],
  ['lime', .5, [[1340,440],[1510,440],[1510,560],[1230,570]]],
  ['lime', .85, [[1230,570],[1510,550],[1510,700],[1200,690]]],
  ['spring', .86, [[1120,690],[1510,680],[1470,800],[1460,960],[1000,980],[1080,860]]],
  ['lime', .82, [[740,960],[1470,960],[1470,1120],[1240,1130],[1235,1025],[700,1060]]],
  ['spring', .7, [[1235,1120],[1470,1100],[1440,1285],[1300,1230]]],
  ['lime', .07, [[1040,120],[1510,120],[1510,560],[1040,560]]],
  ['magenta', 1, ALL]
];
function inPoly(x, y, p) {
  var inside = false;
  for (var i = 0, j = p.length - 1; i < p.length; j = i++) {
    if ((p[i][1] > y) !== (p[j][1] > y) && x < (p[j][0] - p[i][0]) * (y - p[i][1]) / (p[j][1] - p[i][1]) + p[i][0]) inside = !inside;
  }
  return inside;
}
var seed = 20211012;
function rnd() {
  seed = (seed + 0x6D2B79F5) | 0;
  var t = Math.imul(seed ^ (seed >>> 15), 1 | seed);
  t = (t + Math.imul(t ^ (t >>> 7), 61 | t)) ^ t;
  return ((t ^ (t >>> 14)) >>> 0) / 4294967296;
}
var ctx = document.getElementById('scatter').getContext('2d');
function spot(fill, zx, zy) {
  ctx.fillStyle = fill;
  ctx.beginPath();
  ctx.arc(750 + zx / 2.529 - 366, 295 + zy / 2.208 - 103, 2.5, 0, Math.PI * 2);
  ctx.fill();
}
rows.forEach(function (segs, i) {
  var zy = 30 + 19.65 * i;
  var start = i % 2 ? 536 : 549;
  for (var k = -25; k < 45; k++) {
    var zx = start + 25.85 * k;
    var hit = segs.some(function (s) { return zx >= s[0] - 7 && zx <= s[1] + 7; });
    if (!hit) continue;
    for (var r = 0; r < regions.length; r++) {
      if (inPoly(zx, zy, regions[r][2]) && rnd() < regions[r][1]) { spot(C[regions[r][0]], zx, zy); break; }
    }
  }
});
ctx.fillStyle = '#ee3a45';
ctx.beginPath();
ctx.arc(213, 54, 2.2, 0, Math.PI * 2);
ctx.fill();
```
